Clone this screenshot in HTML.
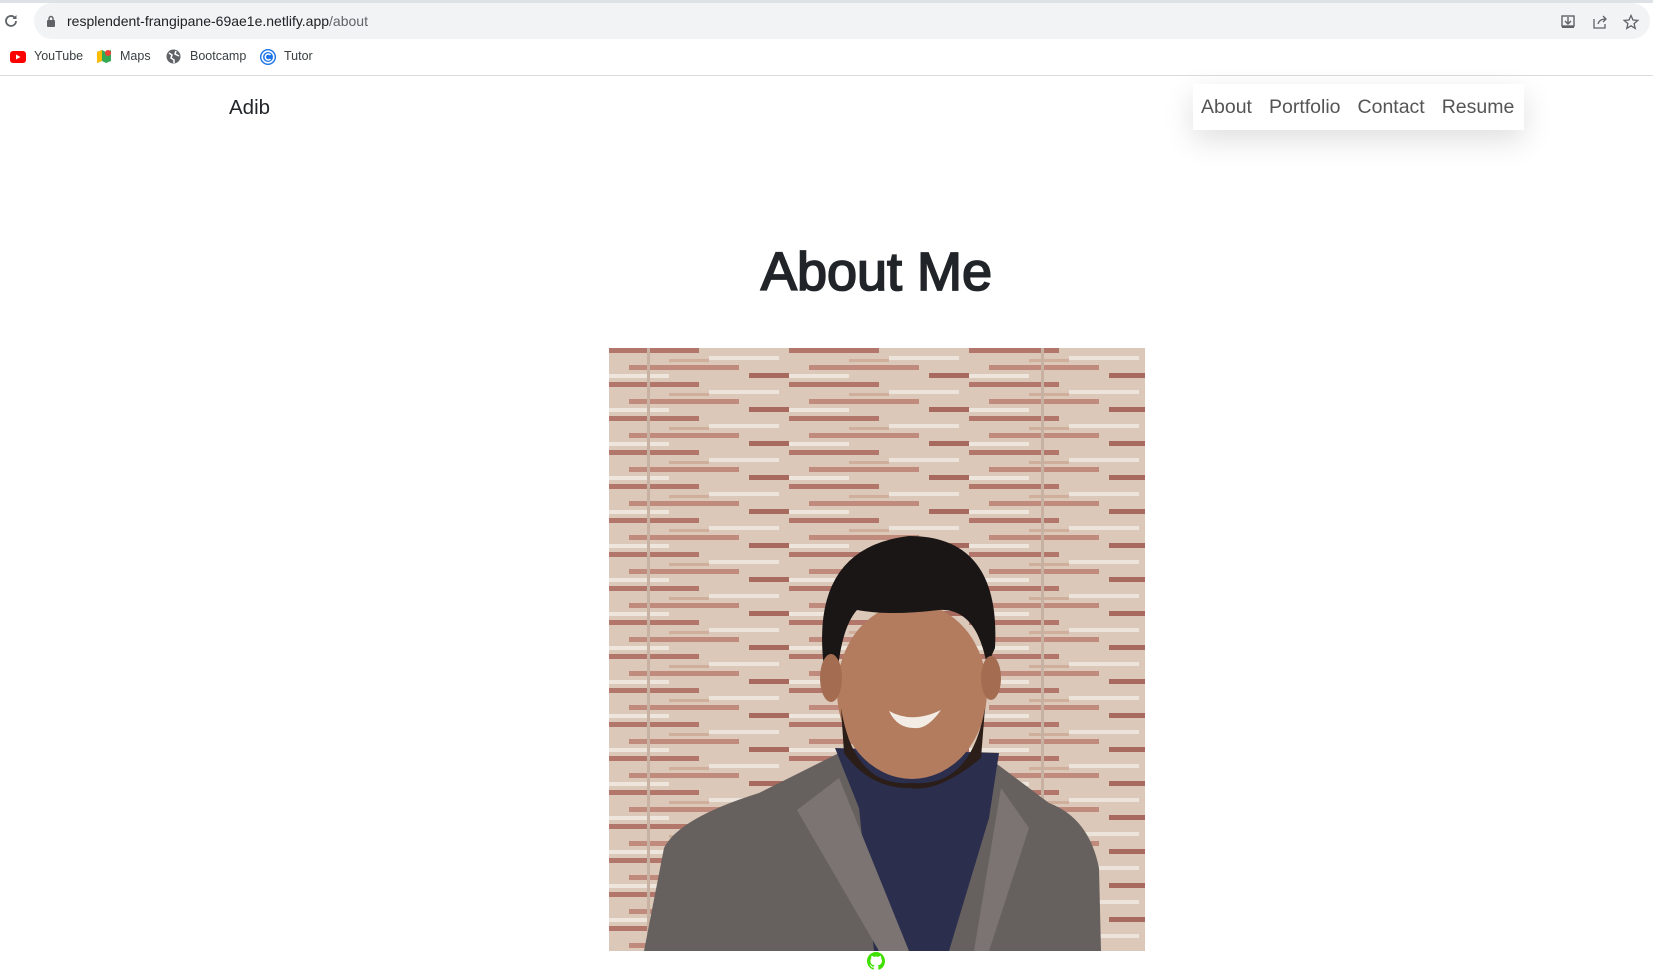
<!DOCTYPE html>
<html><head><meta charset="utf-8"><style>
*{margin:0;padding:0;box-sizing:border-box}
body{width:1653px;height:977px;overflow:hidden;background:#fff;font-family:"Liberation Sans",sans-serif;position:relative}
.abs{position:absolute}
#addr{left:34px;top:3px;width:1616px;height:36px;background:#f1f3f4;border-radius:18px}
#url{left:67px;top:13px;font-size:14px;color:#202124}
#url span{color:#5f6368}
.bm{top:49px;font-size:12.5px;color:#3c4043}
#div{left:0;top:75px;width:1653px;height:1px;background:#dadce0}
#nav{left:1193px;top:84px;width:331px;height:46px;background:#fff;box-shadow:0 10px 30px rgba(0,0,0,.13);font-size:19.5px;color:#555;padding:12px 0 0 8px;white-space:nowrap}
#nav span{margin-right:17px}
</style></head><body>
<div class="abs" style="left:0;top:0;width:1653px;height:3px;background:#dee1e6"></div>
<svg class="abs" style="left:3px;top:13px" width="16" height="16" viewBox="0 0 16 16"><path d="M13 8a5 5 0 1 1-1.5-3.6" fill="none" stroke="#5f6368" stroke-width="1.8"/><path d="M13.5 2v4h-4z" fill="#5f6368"/></svg>
<div class="abs" id="addr"></div>
<svg class="abs" style="left:46px;top:15px" width="10" height="12" viewBox="0 0 10 12"><rect x="1" y="5" width="8" height="7" rx="1" fill="#5f6368"/><path d="M3 5V3.5a2 2 0 0 1 4 0V5" stroke="#5f6368" stroke-width="1.4" fill="none"/></svg>
<div class="abs" id="url">resplendent-frangipane-69ae1e.netlify.app<span>/about</span></div>
<svg class="abs" style="left:1560px;top:14px" width="80" height="16" viewBox="0 0 80 16"><rect x="2" y="2" width="12" height="10" fill="none" stroke="#5f6368" stroke-width="1.4"/><path d="M8 3v7M5 7l3 3 3-3" stroke="#5f6368" stroke-width="1.4" fill="none"/><rect x="2" y="12" width="12" height="2" fill="#5f6368"/><path d="M34 5v9h11v-4M38 10c1-4 4-5 8-5M43 2l3 3-3 3" stroke="#5f6368" stroke-width="1.3" fill="none"/><path d="M71 1.5l2 4.5 4.8.4-3.7 3.2 1.1 4.8-4.2-2.6-4.2 2.6 1.1-4.8-3.7-3.2 4.8-.4z" fill="none" stroke="#5f6368" stroke-width="1.3"/></svg>
<svg class="abs" style="left:10px;top:51px" width="16" height="12" viewBox="0 0 16 12"><rect width="16" height="12" rx="3" fill="#f00"/><path d="M6 3.5v5l4.5-2.5z" fill="#fff"/></svg>
<div class="abs bm" style="left:34px">YouTube</div>
<svg class="abs" style="left:96px;top:49px" width="16" height="15" viewBox="0 0 16 15"><path d="M1 3l5-2 4 2 5-2v11l-5 2-4-2-5 2z" fill="#34a853"/><path d="M1 3l5-2v11l-5 2z" fill="#fbbc04"/><circle cx="12" cy="4" r="3" fill="#ea4335"/></svg>
<div class="abs bm" style="left:120px">Maps</div>
<svg class="abs" style="left:166px;top:49px" width="15" height="15" viewBox="0 0 15 15"><circle cx="7.5" cy="7.5" r="7" fill="#5f6368"/><path d="M3 4l3 2-1 3 3 2v3M10 2l-1 3 4 2" stroke="#fff" stroke-width="1.5" fill="none"/></svg>
<div class="abs bm" style="left:190px">Bootcamp</div>
<svg class="abs" style="left:260px;top:49px" width="16" height="16" viewBox="0 0 16 16"><circle cx="8" cy="8" r="7.3" fill="none" stroke="#1a73e8" stroke-width="1.4"/><circle cx="8" cy="8" r="5" fill="#1a73e8"/><path d="M10.5 6a3 3 0 1 0 0 4" stroke="#fff" stroke-width="1.5" fill="none"/></svg>
<div class="abs bm" style="left:284px">Tutor</div>
<div class="abs" id="div"></div>
<div class="abs" style="left:229px;top:96px;font-size:20.5px;color:#212529">Adib</div>
<div class="abs" id="nav"><span>About</span><span>Portfolio</span><span>Contact</span><span style="margin:0">Resume</span></div>
<div class="abs" style="left:100px;width:1553px;text-align:center;top:241px;font-size:54px;font-weight:normal;-webkit-text-stroke:1.8px #212529;color:#212529">About Me</div>
<svg class="abs" style="left:609px;top:348px" width="536" height="603" viewBox="0 0 536 603">
<defs><pattern id="b" width="180" height="34" patternUnits="userSpaceOnUse">
<rect width="180" height="34" fill="#dcc8b8"/>
<rect y="0" width="90" height="5" fill="#b3766a"/><rect x="100" y="8" width="70" height="4" fill="#ece4da"/>
<rect x="20" y="17" width="110" height="5" fill="#c08a7c"/><rect x="140" y="25" width="40" height="5" fill="#a86a5e"/>
<rect x="0" y="26" width="60" height="4" fill="#eee6dc"/><rect x="60" y="11" width="40" height="3" fill="#cfae9c"/>
</pattern></defs>
<rect width="536" height="603" fill="url(#b)"/>
<rect x="38" width="3" height="603" fill="#c7b1a2"/><rect x="432" width="3" height="603" fill="#c7b1a2"/>
<path d="M35 603 L55 500 Q70 470 150 445 L230 405 L380 410 L440 455 Q480 470 490 520 L492 603z" fill="#66605f"/>
<path d="M226 400 L390 405 L380 470 L340 603 L265 603 L250 460z" fill="#2b2f4d"/>
<path d="M188 462 L230 430 L300 603 L270 603z" fill="#7b7473"/><path d="M392 440 L420 480 L380 603 L365 603z" fill="#7b7473"/>
<ellipse cx="303" cy="343" rx="75" ry="88" fill="#b37c5f"/>
<path d="M232 360 Q245 440 303 435 Q362 440 376 360 L372 410 Q330 445 300 440 Q260 440 235 405z" fill="#2b1d18"/>
<path d="M280 363 Q303 376 332 362 Q318 382 305 380 Q288 380 280 363z" fill="#f2ece4"/>
<path d="M215 320 Q200 200 300 188 Q392 188 386 300 L378 318 Q368 260 330 262 Q280 268 248 262 Q232 280 228 330z" fill="#1b1616"/>
<ellipse cx="222" cy="330" rx="11" ry="24" fill="#a46d52"/><ellipse cx="382" cy="330" rx="10" ry="22" fill="#a46d52"/>
</svg>
<svg class="abs" style="left:867px;top:952px" width="18" height="18" viewBox="0 0 16 16"><path fill="#3fe000" d="M8 0C3.580 0 0 3.580 0 8c0 3.540 2.290 6.530 5.470 7.590.4.07.55-.17.55-.38v-1.4c-2.010.44-2.530-.89-2.530-.89-.36-.91-.88-1.160-.88-1.160-.72-.5.06-.49.06-.49.8.06 1.220.82 1.220.82.71 1.230 1.870.87 2.330.67.07-.52.28-.87.5-1.070-1.780-.2-3.640-.89-3.640-3.960 0-.87.31-1.590.82-2.150-.08-.2-.36-1.020.08-2.120 0 0 .67-.21 2.2.82.64-.18 1.320-.27 2-.27.68 0 1.360.09 2 .27 1.530-1.040 2.2-.82 2.2-.82.44 1.1.16 1.920.08 2.120.51.56.82 1.270.82 2.150 0 3.070-1.870 3.750-3.650 3.950.29.25.54.73.54 1.480v2.2c0 .21.15.46.55.38A8.010 8.010 0 0 0 16 8c0-4.420-3.580-8-8-8z"/></svg>
</body></html>
